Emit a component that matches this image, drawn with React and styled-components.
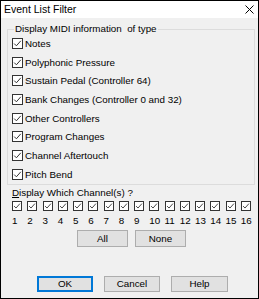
import React from 'react'
import styled, { createGlobalStyle } from 'styled-components'

const GlobalStyle = createGlobalStyle`
    html, body {
        margin: 0;
        padding: 0;
        background: #ffffff;
    }
    * {
        box-sizing: border-box;
    }
`

const Window = styled.div`
    width: 259px;
    height: 299px;
    border: 1px solid #000;
    background: #f0f0f0;
    display: flex;
    flex-direction: column;
    font-family: "Liberation Sans Narrow", "Liberation Sans", Arial, sans-serif;
    font-size: 9.8px;
    color: #000;
    overflow: hidden;
`
const TitleBar = styled.div`
    height: 17px;
    flex: none;
    background: #fff;
    display: flex;
    align-items: center;
    justify-content: space-between;
    padding: 0 3px 1px 3px;
    font-size: 10.5px;
`
const Close = styled.svg`
    width: 9px;
    height: 9px;
    margin-right: 1px;
`
const Content = styled.div`
    flex: 1;
    display: flex;
    flex-direction: column;
    padding: 6px 3px 0 6px;
`
const Group = styled.fieldset`
    margin: 0;
    padding: 0 0 0 4px;
    border: 1px solid #dcdcdc;
    min-width: 0;
    display: flex;
    flex-direction: column;
`
const Legend = styled.legend`
    padding: 0 1px;
    margin-left: 2px;
    line-height: 10px;
`
const Row = styled.label`
    height: 18.7px;
    display: flex;
    align-items: center;
    gap: 2px;
    white-space: nowrap;
`
const Box = styled.span`
    width: ${({ size }) => size}px;
    height: ${({ size }) => size}px;
    border: 1px solid #333;
    background: #fff;
    display: inline-flex;
    align-items: center;
    justify-content: center;
    flex: none;
`
const SectionLabel = styled.div`
    margin: 2px 0 0 5px;
    line-height: 12px;
    u {
        text-decoration: underline;
    }
`
const ChannelGrid = styled.div`
    display: grid;
    grid-template-columns: repeat(16, 15.25px);
    margin: 2px 0 0 5px;
`
const ChannelCell = styled.div`
    display: flex;
    flex-direction: column;
    align-items: flex-start;
    gap: 4px;
    line-height: 11px;
`
const ButtonRow = styled.div`
    display: flex;
    gap: ${({ gap }) => gap}px;
    padding-left: ${({ left }) => left}px;
    margin-top: ${({ top }) => top}px;
`
const Button = styled.button`
    width: ${({ w }) => w}px;
    height: ${({ h }) => h}px;
    background: #e1e1e1;
    border: 1px solid ${({ focused }) => (focused ? '#0078d7' : '#adadad')};
    box-shadow: ${({ focused }) => (focused ? 'inset 0 0 0 1px #0078d7' : 'none')};
    font: inherit;
    color: #000;
    padding: 0;
`

const Check = ({ size }) => (
    <Box size={size}>
        <svg width={size - 2} height={size - 2} viewBox="0 0 9 9">
            <path d="M1.2 4.6 L3.4 6.8 L7.8 1.8" fill="none" stroke="#333" strokeWidth="1" />
        </svg>
    </Box>
)

const types = [
    'Notes',
    'Polyphonic Pressure',
    'Sustain Pedal (Controller 64)',
    'Bank Changes (Controller 0 and 32)',
    'Other Controllers',
    'Program Changes',
    'Channel Aftertouch',
    'Pitch Bend',
]

const channels = Array.from({ length: 16 }, (_, i) => i + 1)

export default function App() {
    return (
        <>
            <GlobalStyle />
            <Window>
                <TitleBar>
                    <span>Event List Filter</span>
                    <Close viewBox="0 0 9 9">
                        <path d="M0.5 0.5 L8.5 8.5 M8.5 0.5 L0.5 8.5" stroke="#000" strokeWidth="1" />
                    </Close>
                </TitleBar>
                <Content>
                    <Group>
                        <Legend>Display MIDI information &nbsp;of type</Legend>
                        {types.map(t => (
                            <Row key={t}>
                                <Check size={11} />
                                {t}
                            </Row>
                        ))}
                    </Group>
                    <SectionLabel><u>D</u>isplay Which Channel(s) ?</SectionLabel>
                    <ChannelGrid>
                        {channels.map(c => (
                            <ChannelCell key={c}>
                                <Check size={10} />
                                <span>{c}</span>
                            </ChannelCell>
                        ))}
                    </ChannelGrid>
                    <ButtonRow left={70} gap={7} top={4}>
                        <Button w={51} h={17}>All</Button>
                        <Button w={51} h={17}>None</Button>
                    </ButtonRow>
                    <ButtonRow left={30} gap={11} top={29}>
                        <Button w={56} h={16} focused>OK</Button>
                        <Button w={56} h={16}>Cancel</Button>
                        <Button w={57} h={16}>Help</Button>
                    </ButtonRow>
                </Content>
            </Window>
        </>
    )
}
